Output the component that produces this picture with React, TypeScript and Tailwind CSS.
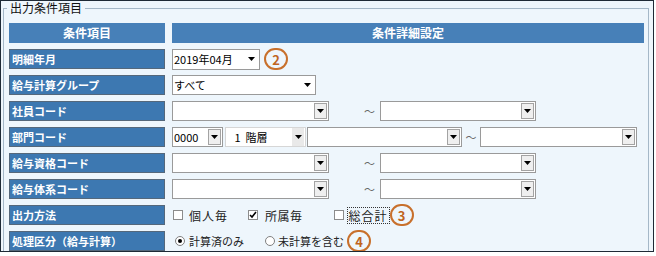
import React from "react";

function Tri() {
  return (
    <svg width="7" height="4" viewBox="0 0 7 4">
      <path d="M0 0h7L3.5 4z" fill="#000" />
    </svg>
  );
}

type Arrow = "box" | "plain" | "gray";

function Sel({ w, text, arrow = "box", extra = "" }: { w: string; text?: string; arrow?: Arrow; extra?: string }) {
  return (
    <div className={`${w} ${extra} h-[20px] border border-[#9a9a9a] bg-white flex items-center shrink-0`}>
      <div className="flex-1 pl-[1px] text-[11px] leading-[15px] text-black whitespace-nowrap">{text}</div>
      {arrow === "box" && (
        <div className="w-[13px] h-[16px] mr-[1px] border border-[#a3a3a3] bg-[#efefef] flex items-center justify-center">
          <Tri />
        </div>
      )}
      {arrow === "plain" && (
        <div className="w-[15px] h-full flex items-center justify-center">
          <Tri />
        </div>
      )}
      {arrow === "gray" && (
        <div className="w-[12px] h-[18px] mr-[1px] bg-[#e9e9e9] flex items-center justify-center">
          <Tri />
        </div>
      )}
    </div>
  );
}

function Mark({ n, extra = "" }: { n: string; extra?: string }) {
  return (
    <div className={`w-[24px] h-[22px] rounded-full border-2 border-[#c8702c] text-[#c0641e] text-[13px] leading-none font-bold flex items-center justify-center shrink-0 ${extra}`}>
      {n}
    </div>
  );
}

function Label({ children }: { children: React.ReactNode }) {
  return (
    <div className="bg-[#3d78b1] border border-[#55687b] text-white font-bold text-[11px] leading-[15px] pl-[2px] flex items-center whitespace-nowrap">
      {children}
    </div>
  );
}

function Check({ checked = false }: { checked?: boolean }) {
  return (
    <div className="w-[10px] h-[10px] border border-[#8c8c8c] bg-white flex items-center justify-center shrink-0">
      {checked && (
        <svg width="8" height="8" viewBox="0 0 8 8">
          <path d="M1 4l2 2 4-5" stroke="#000" strokeWidth="1.6" fill="none" />
        </svg>
      )}
    </div>
  );
}

function Radio({ checked = false }: { checked?: boolean }) {
  return (
    <div className="w-[10px] h-[10px] rounded-full border border-[#808080] bg-white flex items-center justify-center shrink-0">
      {checked && <div className="w-[4px] h-[4px] rounded-full bg-black" />}
    </div>
  );
}

function Range() {
  return (
    <div className="flex items-center">
      <Sel w="w-[157px]" />
      <span className="w-[51px] text-right pr-[5px] text-[11px] leading-[15px] text-[#666]">～</span>
      <Sel w="w-[156px]" />
    </div>
  );
}

export default function App() {
  return (
    <div className="w-[656px] h-[256px] bg-white font-['Noto_Sans_CJK_JP',sans-serif]">
      <div className="w-[654px] h-[252px] border border-[#1e2a36] bg-[#eef6fc] overflow-hidden">
        <fieldset className="ml-[2px] w-[646px] h-[300px] border border-[#a5b8c8] pl-[3px]">
          <legend className="px-[3px] text-[12px] leading-[14px] text-[#111]">出力条件項目</legend>
          <div className="ml-[2px] mt-[8px] grid grid-cols-[156px_472px] gap-x-[7px] gap-y-[6px] auto-rows-[20px] text-black">
            <div className="bg-[#4780b8] text-white font-bold text-[12px] leading-[16px] flex items-center justify-center">条件項目</div>
            <div className="bg-[#4780b8] text-white font-bold text-[12px] leading-[16px] flex items-center justify-center">条件詳細設定</div>

            <Label>明細年月</Label>
            <div className="flex items-center">
              <Sel w="w-[88px]" text="2019年04月" arrow="plain" extra="!h-[21px] border-[#7a7a7a]" />
              <Mark n="2" extra="ml-[4px] font-semibold" />
            </div>

            <Label>給与計算グループ</Label>
            <div className="flex items-center">
              <Sel w="w-[144px]" text="すべて" arrow="plain" />
            </div>

            <Label>社員コード</Label>
            <Range />

            <Label>部門コード</Label>
            <div className="flex items-center">
              <Sel w="w-[51px]" text="0000" />
              <Sel w="w-[81px]" text={"\u00a0\u00a0\u00a01\u00a0\u00a0階層"} arrow="gray" extra="ml-[2px] border-[#d6d6d6]" />
              <Sel w="w-[155px]" extra="ml-[1px]" />
              <span className="w-[18px] text-center text-[11px] leading-[15px] text-[#666]">～</span>
              <Sel w="w-[157px]" />
            </div>

            <Label>給与資格コード</Label>
            <Range />

            <Label>給与体系コード</Label>
            <Range />

            <Label>出力方法</Label>
            <div className="flex items-center text-[12px] leading-[15px] text-[#222]">
              <div className="ml-[1px]"><Check /></div>
              <span className="ml-[6px] tracking-[1px]">個人毎</span>
              <div className="ml-[20px]"><Check checked /></div>
              <span className="ml-[7px] tracking-[0.5px]">所属毎</span>
              <div className="ml-[31px]"><Check /></div>
              <span className="ml-[3px] px-[1px] border border-dotted border-[#333] tracking-[1px]">総合計</span>
              <Mark n="3" />
            </div>

            <Label>処理区分（給与計算）</Label>
            <div className="flex items-center text-[11px] leading-[15px] text-[#222]">
              <div className="ml-[3px]"><Radio checked /></div>
              <span className="ml-[4px]">計算済のみ</span>
              <div className="ml-[21px]"><Radio /></div>
              <span className="ml-[3px]">未計算を含む</span>
              <Mark n="4" extra="ml-[3px]" />
            </div>
          </div>
        </fieldset>
      </div>
    </div>
  );
}
